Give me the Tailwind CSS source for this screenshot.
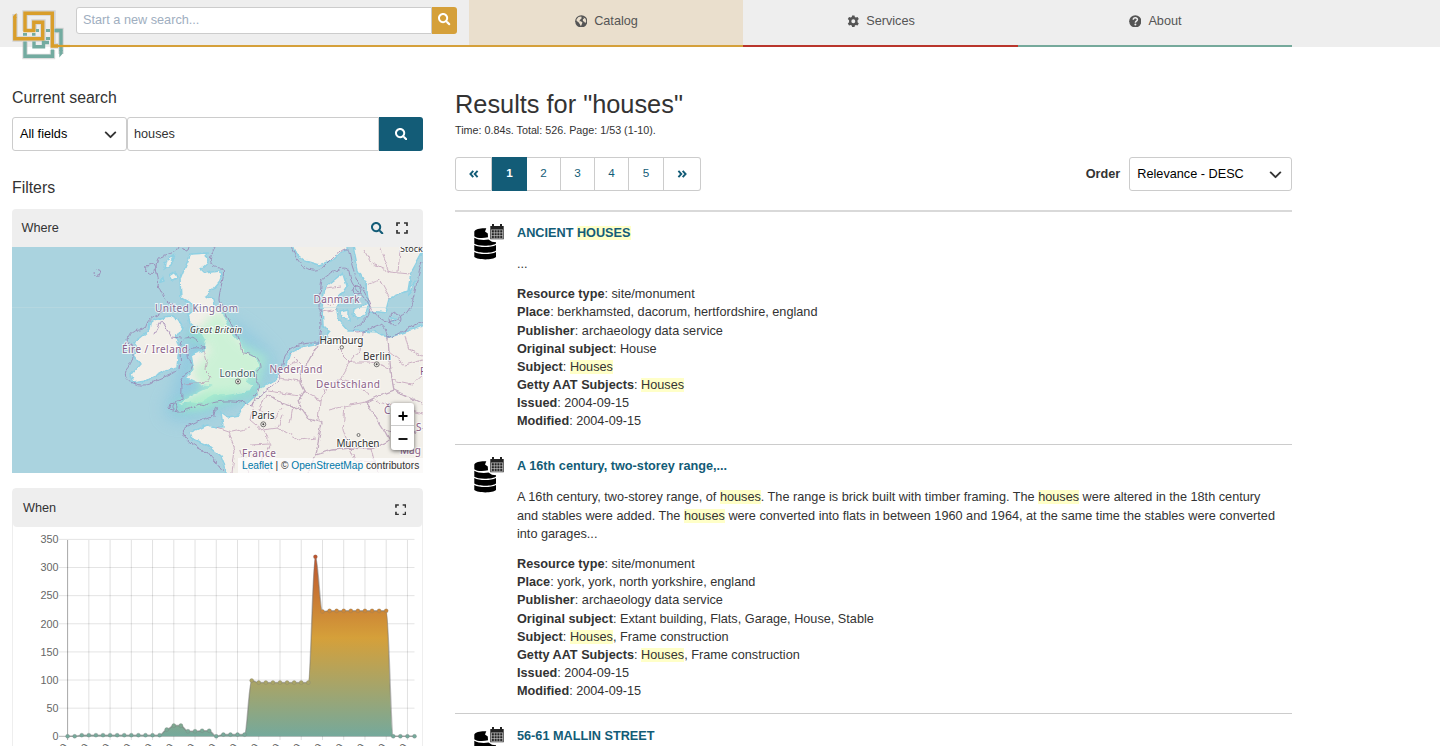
<!DOCTYPE html>
<html lang="en">
<head>
<meta charset="utf-8">
<title>Results for "houses"</title>
<script src="https://cdn.jsdelivr.net/npm/@tailwindcss/browser@4"></script>
</head>
<body class="h-[746px] overflow-hidden bg-white font-['Liberation_Sans',Arial,sans-serif] text-[12.7px] leading-[18.14px] text-[#333]">
<svg class="hidden">
  <symbol id="search" viewBox="0 0 512 512"><path d="M505 442.700L405.300 343c-4.500-4.500-10.600-7-17-7H372c27.600-35.300 44-79.700 44-128C416 93.100 322.900 0 208 0S0 93.100 0 208s93.100 208 208 208c48.300 0 92.700-16.400 128-44v16.300c0 6.400 2.500 12.500 7 17l99.700 99.700c9.400 9.400 24.600 9.400 33.900 0l28.300-28.300c9.400-9.400 9.400-24.600.1-34zM208 336c-70.700 0-128-57.200-128-128 0-70.700 57.200-128 128-128 70.700 0 128 57.200 128 128 0 70.700-57.200 128-128 128z"/></symbol>
  <symbol id="expand" viewBox="0 0 12 12"><path d="M1 4V1H4M8 1H11V4M11 8V11H8M4 11H1V8" fill="none" stroke="currentColor" stroke-width="1.700"/></symbol>
  <symbol id="chev" viewBox="0 0 12 8"><path d="M1.200 1.400L6 6.200L10.800 1.400" fill="none" stroke="#333" stroke-width="1.900" stroke-linecap="round" stroke-linejoin="round"/></symbol>
  <symbol id="dbl" viewBox="0 0 10 8"><path d="M4.300 .8L1.400 4L4.300 7.200M8.600 .8L5.700 4L8.600 7.200" fill="none" stroke="#135c77" stroke-width="1.900"/></symbol>
  <symbol id="db" viewBox="0 0 30 36">
    <path d="M.3 7.500C1.500 5 7 3.900 12.300 4.300L11 7.500L13.800 9.500L14 13.300C9 14.600 2.500 14.300 .3 12.200Z"/>
    <path d="M.3 13.800C4 16 10 16.500 14.500 15.500L18 17.700L22 18.300V19.500C19 22.300 4 22.600 .3 19.800Z"/>
    <path d="M.3 20.900C5 23.700 17 23.700 22 20.900V26.500C19 29.500 4 29.500 .3 26.500Z"/>
    <path d="M.3 27.900C5 30.700 17 30.700 22 27.900V33C19 36.200 4 36.200 .3 33Z"/>
    <path d="M16.300 2H29.700V15.300H16.300ZM18 0H20V3H18ZM26 0H28V3H26Z" fill="#222"/>
    <path d="M17.300 5.800H28.800M17.300 8.800H28.800M17.300 11.600H28.800M17.300 14.400H28.800M17.500 5.800V14.400M20.300 5.800V14.400M23 5.800V14.400M25.800 5.800V14.400M28.600 5.800V14.400" stroke="#ddd" stroke-width=".6"/>
  </symbol>
</svg>

<header class="relative flex h-[47px] bg-[#eee] text-[#555]">
  <div class="w-[62px] shrink-0"></div>
  <div class="flex w-[407px] shrink-0 items-start border-b-2 border-[#d5a03a] pl-[14px] pt-[7px]">
    <div class="flex h-[27px] w-[356px] items-center rounded-l-[3px] border border-[#ccc] bg-white pl-[6px] text-[#a0aec0]">Start a new search...</div>
    <div class="flex h-[27px] w-[25px] items-center justify-center rounded-r-[3px] bg-[#d5a03a] text-white"><svg class="mb-[2px] size-[12.500px] fill-current"><use href="#search"/></svg></div>
  </div>
  <nav class="flex w-[823.400px] shrink-0">
    <a class="flex flex-1 items-center justify-center gap-[7px] border-b-2 border-[#d5a03a] bg-[#eadfcd] pb-[3px]">
      <svg class="size-[12.600px]" viewBox="0 0 16 16"><circle cx="8" cy="8" r="7.800" fill="#555"/><path d="M2 5.500L4.500 2.500L8 1.800L8.500 4L6.500 6L5.500 8H7.500L9.500 9.500L8.500 12L7.500 14.300L6 11.500L4.200 9L2 7.500ZM10.500 3L13.500 4.800L14.300 8L13 10.500L11.800 8.500L10 7.500V5.500L11.500 4.500Z" fill="#eadfcd"/></svg>Catalog</a>
    <a class="flex flex-1 items-center justify-center gap-[7px] border-b-2 border-[#b9352b] pb-[3px]">
      <svg class="size-[12.600px]" viewBox="0 0 16 16"><path d="M6.500 .5H9.500L10 2.600L11.300 3.300L13.400 2.600L15 5.200L13.400 6.800V9.200L15 10.800L13.400 13.400L11.300 12.700L10 13.400L9.500 15.500H6.500L6 13.400L4.700 12.700L2.600 13.400L1 10.800L2.600 9.200V6.800L1 5.200L2.600 2.600L4.700 3.300L6 2.600ZM8 5.500A2.500 2.500 0 1 0 8 10.500A2.500 2.500 0 1 0 8 5.500Z" fill="#555"/></svg>Services</a>
    <a class="flex flex-1 items-center justify-center gap-[7px] border-b-2 border-[#75a99b] pb-[3px]">
      <svg class="size-[12.600px]" viewBox="0 0 16 16"><circle cx="8" cy="8" r="7.800" fill="#555"/><path d="M5.400 6C5.500 2.700 10.800 2.900 10.700 5.900C10.600 7.800 8.100 7.700 8.100 9.700" fill="none" stroke="#eee" stroke-width="1.900"/><circle cx="8.100" cy="12.100" r="1.300" fill="#eee"/></svg>About</a>
  </nav>
  <svg class="absolute left-[10px] top-[8px] h-[54px] w-[62px]" viewBox="10 8 62 54" fill="none" stroke-width="3.400">
    <g stroke="#aaa" stroke-width="5.400" opacity=".4"><path d="M15 14V39H43V22H34V31M25 31V13H53V46H60"/><path d="M25 42V56.500H52.500V50M61 54V30.500H55"/></g>
    <g stroke="#73aba0"><path d="M25 41.500V56.300H52.500V49.500M34 41.500V46.800H43.500V42.500H49M61 51V30.500H54.500"/><path d="M59.300 50H62.700V53.500L59.300 57.500Z" fill="#73aba0" stroke="none"/><path d="M23 34.300H27M32 34.300H35.500M36 30.500H39M46 30.500H50M46 38.500H50" stroke-width="2.800"/></g>
    <g stroke="#d99e2b"><path d="M14.800 17V38.800H42.700V22.300H33.800V30.500H25V13.300H52.300V46H58"/><path d="M13.100 16L16.500 13V18H13.100Z" fill="#d99e2b" stroke="none"/><path d="M57 46H70" stroke-width="2.200"/></g>
  </svg>
</header>

<main class="flex gap-[32px] pl-[12px]">
  <aside class="w-[411px] shrink-0">
    <h2 class="mt-[40px] text-[15.850px] leading-[22px]">Current search</h2>
    <div class="mt-[8px] flex h-[34px]">
      <div class="flex w-[115px] items-center justify-between rounded-[3px] border border-[#ccc] pl-[7px] pr-[9px] pt-px text-black">All fields<svg class="h-[8px] w-[13px]"><use href="#chev"/></svg></div>
      <div class="flex w-[252px] items-center rounded-l-[3px] border border-[#ccc] pl-[6px] pt-px">houses</div>
      <div class="flex w-[44px] items-center justify-center rounded-r-[3px] bg-[#135c77] text-white"><svg class="size-[12.600px] fill-current"><use href="#search"/></svg></div>
    </div>
    <h2 class="mt-[26px] text-[15.850px] leading-[22px]">Filters</h2>
    <section class="mt-[10px]">
      <div class="flex h-[38px] items-center rounded-t-[4px] bg-[#eee] px-[9.500px]"><span class="flex-1">Where</span>
        <svg class="size-[12.600px] fill-[#135c77]"><use href="#search"/></svg><svg class="ml-[12px] mr-[5.500px] size-[12px]"><use href="#expand"/></svg></div>
      <div class="relative h-[226px] overflow-hidden">
        <svg class="block h-[226px] w-[411px]" viewBox="12 247 411 226">
          <defs>
            <filter id="b3" x="-20%" y="-20%" width="140%" height="140%"><feGaussianBlur stdDeviation="5"/></filter>
            <filter id="b6" x="-30%" y="-30%" width="160%" height="160%"><feGaussianBlur stdDeviation="8"/></filter>
            <filter id="rough"><feTurbulence type="fractalNoise" baseFrequency=".13" numOctaves="3" seed="4"/><feDisplacementMap in="SourceGraphic" scale="5" xChannelSelector="R" yChannelSelector="G"/></filter>
          </defs>
          <rect x="12" y="247" width="411" height="226" fill="#aad3df"/>
          <path d="M195 320C220 305 250 330 272 355C285 385 245 400 215 412C190 425 160 425 165 405C180 390 175 350 195 320Z" fill="#86c5e0" opacity=".65" filter="url(#b6)"/>
          <g filter="url(#rough)" fill="#f2efe9" stroke="#8fd0e3" stroke-width="1.500">
            <path d="M191 254L207 253L208 262L200 269L204 273L219 271L222 275L219 283L213 290L206 296L214 299L215 305L224 314L232 333L241 343L245 352L256 357L259 366L255 373L246 380L254 385L250 392L225 396L213 396L200 403L190 402L176 407L185 399L199 391L210 386L202 385L186 378L194 370L191 355L204 350L205 340L199 330L190 324L188 315L196 308L188 302L181 298L180 280L186 265Z"/>
            <path d="M174 256L165 262L164 269L170 265ZM176 272L170 276L173 281L178 278ZM163 277L161 282L164 281Z"/>
            <path d="M150 322L160 318L170 316L177 320L182 328L176 337L179 347L177 368L163 372L147 381L133 383L130 375L140 364L133 355L138 350L133 343L143 335L149 330Z"/>
            <path d="M190 433L207 425L217 427L223 427L221 412L228 417L239 415L243 407L255 396L258 389L273 381L285 367L290 353L300 348L314 345L325 339L330 332L323 325L322 307L325 287L343 273L347 286L340 297L336 307L339 320L349 331L362 331L378 332L388 338L402 333L426 325V480H227L225 466L221 456L207 445L192 439Z"/>
            <path d="M291 242L295 253L305 261L319 265L333 260L347 247L350 240Z"/>
            <path d="M352 240L358 270L366 285L370 311L386 313L390 298L408 291L411 273L418 260L428 242Z"/>
            <path d="M341 312L349 310L349 321L342 319ZM354 309L368 304L366 315L358 319L353 315ZM391 317L396 318L394 322ZM415 280L409 296L410 286Z"/>
          </g>
          <g fill="#8ee3c8" filter="url(#b3)" opacity=".65"><path d="M172 405L200 393L250 388L262 380L256 396L230 402L205 409L180 413ZM186 335L203 328L205 342L190 342Z"/></g>
          <path filter="url(#b3)" d="M207 318L222 310L233 332L244 344L268 357L260 383L232 395L200 409L178 407L203 390L191 372L210 350L199 336Z" fill="#b4f3cb" opacity=".6"/>
          <g filter="url(#rough)" fill="none" stroke="#9575ab" stroke-width="1" opacity=".7">
            <path d="M178 247C176 256 158 253 157 262C154 270 160 278 158 286C164 292 160 300 172 305C164 317 150 312 146 326C145 333 130 326 128 340C134 350 136 358 126 370C122 380 137 388 150 384C160 378 175 375 180 368C182 360 177 348 184 340C190 330 200 345 204 348C194 348 184 345 188 360C198 365 188 375 180 378C184 386 180 397 183 400C171 401 168 412 178 411C190 412 196 401 205 405C222 399 239 400 252 405C260 390 274 389 279 378"/>
            <path d="M215 247C208 260 208 268 222 268C227 274 218 290 219 301C224 308 228 320 238 336L242 353C256 353 264 363 258 373C254 380 267 388 252 396"/>
            <path d="M279 378L285 356C293 343 306 343 319 343L321 325C320 311 319 295 322 280C331 273 345 263 349 271C350 290 366 294 371 310C365 326 347 330 356 333C370 333 380 316 386 331L388 338C402 333 413 324 426 322"/>
            <path d="M291 247C300 270 315 277 327 263C340 250 348 242 350 257C355 282 367 293 371 306C377 319 388 327 400 317C415 312 414 287 422 262M183 431C188 423 203 420 213 415C220 408 214 400 214 418M183 431C184 441 199 449 207 452C213 460 217 464 224 473M155 334L162 320L171 337L181 338"/>
            <circle cx="97.500" cy="273" r="3.500"/><circle cx="150.500" cy="268.500" r="5"/><circle cx="173" cy="407" r="4"/><circle cx="395" cy="319" r="6"/><circle cx="357" cy="290" r="4"/><circle cx="186" cy="246" r="4"/>
          </g>
          <g filter="url(#rough)" fill="none" stroke="#aa87aa" stroke-width="1.300" opacity=".65">
            <path d="M266 394L279 402L293 407L302 409L309 419L322 423L318 442L316 455M302 409L299 400L304 391L300 383L302 370L309 360L317 345M388 338L389 352L392 380L394 390L376 397L366 402L373 414L383 429L389 440L372 449L350 448L333 450L316 455L308 473M383 429L405 437L423 427M394 390L411 398L423 404"/>
          </g>
          <g filter="url(#rough)" fill="none" stroke="#b58cae" stroke-width=".9" opacity=".7">
            <path d="M204 350L207 360L205 370L211 376L208 382L184 384M266 394L260 410L275 418L283 408M255 397L250 420L262 430L278 428L283 415M217 427L232 432L250 428M229 432L235 450L232 473M262 430L271 444L262 460L270 473M278 428L300 440L316 438M250 445L270 444M240 450L248 473M304 391L320 400L328 385L340 380L350 362L338 350M320 400L318 421M340 380L358 385L370 395M328 410L345 406L366 402M345 406L343 430L350 448M350 362L360 350L362 332M350 362L370 362L390 368M290 353L300 363M279 378L300 381M268 391L300 396M405 335L409 350L423 356M389 352L405 365L423 360M392 380L412 384L423 374M375 400L400 408L423 414M372 449L378 473M350 448L355 460L378 463M403 437L406 450M364 250L371 263L390 272L410 274M366 285L380 280L390 298M380 247L390 272M400 250L398 272M323 300L330 305L336 298M326 288L340 286M322 312L337 309M288 365L298 360M293 407L290 423"/>
          </g>
          <path d="M12 307.500H423" stroke="#c0dbe1" stroke-width=".5"/>
          <g font-family="Noto Sans" font-size="10" fill="#8a6088" stroke="#fff" stroke-opacity=".75" stroke-width="2" paint-order="stroke">
            <text x="155" y="311.500" textLength="83" fill="#7f6b93">United Kingdom</text>
            <text x="122" y="353" textLength="66">Éire / Ireland</text>
            <text x="313.500" y="302.500" textLength="46">Danmark</text>
            <text x="269.500" y="373" textLength="53">Nederland</text>
            <text x="316" y="388" textLength="64">Deutschland</text>
            <text x="242" y="456.500" textLength="34">France</text>
            <text x="420" y="375">P</text><text x="384" y="414">Č</text><text x="416" y="431">S</text><text x="400" y="454">Mag</text>
            <g fill="#333">
              <text x="190" y="333" font-size="8.500" font-style="italic" textLength="52">Great Britain</text>
              <text x="219.500" y="376.500" textLength="36" fill="#456">London</text>
              <text x="251.500" y="419" textLength="23">Paris</text>
              <text x="319.500" y="344" textLength="44">Hamburg</text>
              <text x="363" y="359.500" textLength="28">Berlin</text>
              <text x="336.500" y="447" textLength="43">München</text>
              <text x="400" y="252" font-size="9">Stock</text>
            </g>
          </g>
          <g fill="#f2efe9" stroke="#555" stroke-width=".8"><circle cx="238" cy="381.500" r="2.500"/><circle cx="263.300" cy="424.300" r="2.500"/><circle cx="376.700" cy="364.300" r="2.500"/><circle cx="341.800" cy="347.300" r="1.700"/><circle cx="358.500" cy="435" r="1.500"/></g>
          <g fill="#444"><circle cx="238" cy="381.500" r="1"/><circle cx="263.300" cy="424.300" r="1"/><circle cx="376.700" cy="364.300" r="1"/></g>
        </svg>
        <div class="absolute right-[9px] top-[156px] w-[23px] rounded-[3px] bg-white shadow-[0_1px_4px_rgba(0,0,0,.6)]">
          <div class="flex h-[23px] items-center justify-center border-b border-[#ccc]"><svg class="mt-[4px] size-[10px]" viewBox="0 0 10 10"><path d="M5 .5V9.500M.5 5H9.500" stroke="#000" stroke-width="1.800"/></svg></div>
          <div class="flex h-[24px] items-center justify-center"><svg class="mt-[2px] size-[10px]" viewBox="0 0 10 10"><path d="M.5 5H9.500" stroke="#000" stroke-width="1.800"/></svg></div>
        </div>
        <div class="absolute bottom-0 right-0 h-[15px] w-[185px] whitespace-nowrap bg-white/70 pl-[4px] text-[10.200px] leading-[15px]"><span class="text-[#0078a8]">Leaflet</span> | © <span class="text-[#0078a8]">OpenStreetMap</span> contributors</div>
      </div>
    </section>
    <section class="mt-[15px] h-[300px] rounded-[4px] border border-[#eee]">
      <div class="flex h-[38px] items-center rounded-b-[4px] bg-[#eee] px-[10px] pt-px"><span class="flex-1">When</span><svg class="mr-[6px] mt-[2px] size-[11.500px]"><use href="#expand"/></svg></div>
      <svg id="chart" class="block h-[219px] w-[409px]" viewBox="13 527 409 219">
        <defs><linearGradient id="fill" gradientUnits="userSpaceOnUse" x1="0" y1="540" x2="0" y2="736"><stop offset="0" stop-color="#b9452a"/><stop offset=".5" stop-color="#d5a03a"/><stop offset="1" stop-color="#75a99b"/></linearGradient></defs>
      </svg>
    </section>
  </aside>

  <div class="w-[837.300px] shrink-0">
    <h1 class="mt-[41px] text-[25.350px] leading-[32px]">Results for "houses"</h1>
    <p class="mt-[2px] text-[10.750px] leading-[16px]">Time: 0.84s. Total: 526. Page: 1/53 (1-10).</p>
    <div class="mt-[19px] flex items-center justify-between">
      <div class="flex h-[34px] w-[246px] text-[11.700px] text-[#135c77] *:flex *:items-center *:justify-center *:border-[#ccc] *:pb-[2px]">
        <div class="w-[37px] rounded-l-[3px] border"><svg class="mt-[2px] h-[8px] w-[10px]"><use href="#dbl"/></svg></div>
        <div class="w-[35px] bg-[#135c77] font-bold text-white">1</div>
        <div class="w-[34px] border-y border-r">2</div>
        <div class="w-[34px] border-y border-r">3</div>
        <div class="w-[34px] border-y border-r">4</div>
        <div class="w-[35px] border-y border-r">5</div>
        <div class="w-[37px] rounded-r-[3px] border-y border-r"><svg class="mt-[2px] h-[8px] w-[10px] rotate-180"><use href="#dbl"/></svg></div>
      </div>
      <div class="flex items-center gap-[9px]"><b class="pt-px">Order</b>
        <div class="flex h-[34px] w-[163px] items-center justify-between rounded-[3px] border border-[#ccc] pl-[7px] pr-[9px] pt-px text-black">Relevance - DESC<svg class="h-[8px] w-[13px]"><use href="#chev"/></svg></div>
      </div>
    </div>

    <article class="mt-[19px] flex h-[233.800px] border-t-2 border-[#d9d9d9] pl-[18.500px] pt-[12px]">
      <svg class="h-[36px] w-[30px] shrink-0"><use href="#db"/></svg>
      <div class="ml-[13.500px]">
        <h3 class="font-bold text-[#135c77]">ANCIENT <mark class="bg-[#ffffc8] text-[#135c77]">HOUSES</mark></h3>
        <p class="mt-[13px]">...</p>
        <div class="mt-[12px]">
          <p><b>Resource type</b>: site/monument</p>
          <p><b>Place</b>: berkhamsted, dacorum, hertfordshire, england</p>
          <p><b>Publisher</b>: archaeology data service</p>
          <p><b>Original subject</b>: House</p>
          <p><b>Subject</b>: <mark class="bg-[#ffffc8] text-[#333]">Houses</mark></p>
          <p><b>Getty AAT Subjects</b>: <mark class="bg-[#ffffc8] text-[#333]">Houses</mark></p>
          <p><b>Issued</b>: 2004-09-15</p>
          <p><b>Modified</b>: 2004-09-15</p>
        </div>
      </div>
    </article>
    <article class="flex h-[269.500px] border-t border-[#ccc] pl-[18.500px] pt-[12.500px]">
      <svg class="h-[36px] w-[30px] shrink-0"><use href="#db"/></svg>
      <div class="ml-[13.500px]">
        <h3 class="font-bold text-[#135c77]">A 16th century, two-storey range,...</h3>
        <p class="mt-[13px] whitespace-nowrap">A 16th century, two-storey range, of <mark class="bg-[#ffffc8] text-[#333]">houses</mark>. The range is brick built with timber framing. The <mark class="bg-[#ffffc8] text-[#333]">houses</mark> were altered in the 18th century<br>and stables were added. The <mark class="bg-[#ffffc8] text-[#333]">houses</mark> were converted into flats in between 1960 and 1964, at the same time the stables were converted<br>into garages...</p>
        <div class="mt-[12.300px]">
          <p><b>Resource type</b>: site/monument</p>
          <p><b>Place</b>: york, york, north yorkshire, england</p>
          <p><b>Publisher</b>: archaeology data service</p>
          <p><b>Original subject</b>: Extant building, Flats, Garage, House, Stable</p>
          <p><b>Subject</b>: <mark class="bg-[#ffffc8] text-[#333]">Houses</mark>, Frame construction</p>
          <p><b>Getty AAT Subjects</b>: <mark class="bg-[#ffffc8] text-[#333]">Houses</mark>, Frame construction</p>
          <p><b>Issued</b>: 2004-09-15</p>
          <p><b>Modified</b>: 2004-09-15</p>
        </div>
      </div>
    </article>
    <article class="flex h-[260px] border-t border-[#ccc] pl-[18.500px] pt-[13px]">
      <svg class="h-[36px] w-[30px] shrink-0"><use href="#db"/></svg>
      <div class="ml-[13.500px]"><h3 class="font-bold text-[#135c77]">56-61 MALLIN STREET</h3></div>
    </article>
  </div>
</main>
<script>
const X = i => 67.600 + i * 7.080, Y = v => 736.300 - v * 0.5626;
const data = [0,0,2,2,2,2,2,2,2,2,2,2,2,2,12,19,19,9,9,10,10,0,3,3,3,3,99,95.500,95.500,95.500,95.500,95.500,95.500,95.500,95.500,319,222,223,223,223,223,223,223,223,223,223,0,0,0,0];
let s = '';
for (let i = 0; i < 50; i += 3) s += `<path d="M${X(i)} 540V740" stroke="#000" stroke-opacity="${i ? .12 : .35}"/>`;
for (let v = 0; v <= 350; v += 50) {
  s += `<path d="M59 ${Y(v)}H414.500" stroke="#000" stroke-opacity="${v ? .11 : .3}"/>`;
  s += `<text x="58.500" y="${Y(v) + 3.800}" text-anchor="end" font-size="10.800" fill="#666">${v}</text>`;
}
let line = `M${X(0)} ${Y(0)}`;
for (let i = 1; i < data.length; i++) {
  const a = X(i - 1), b = X(i);
  line += `C${a + 2.500} ${Y(data[i - 1])} ${b - 2.500} ${Y(data[i])} ${b} ${Y(data[i])}`;
}
s += `<path d="${line}V${Y(0)}H${X(0)}Z" fill="url(#fill)"/><path d="${line}" fill="none" stroke="#777" stroke-opacity=".5" stroke-width="1.500"/>`;
data.forEach((v, i) => s += `<circle cx="${X(i)}" cy="${Y(v)}" r="2" fill="url(#fill)" stroke="#777" stroke-opacity=".5" stroke-width=".5"/>`);
for (let i = 0; i < 50; i += 3) s += `<text transform="translate(${X(i) + 1} 747.500) rotate(-50)" text-anchor="end" font-size="10.800" fill="#666">${-1600 + i * 100}</text>`;
document.getElementById('chart').insertAdjacentHTML('beforeend', s);
</script>
</body>
</html>
